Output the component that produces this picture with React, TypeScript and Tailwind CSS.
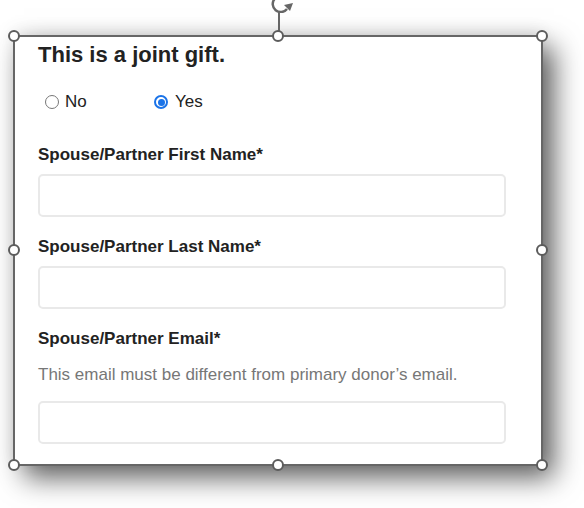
import React from 'react';

const handleSpots = [
  'left-[-7px] top-[-7px]',
  'left-[257px] top-[-7px]',
  'right-[-7px] top-[-7px]',
  'left-[-7px] top-[207px]',
  'right-[-7px] top-[207px]',
  'left-[-7px] bottom-[-7px]',
  'left-[257px] bottom-[-7px]',
  'right-[-7px] bottom-[-7px]',
];

function Field({ label, hint }: { label: string; hint?: string }) {
  return (
    <div className="flex flex-col">
      <label className="text-[17px] leading-[20px] font-bold text-[#222]">{label}</label>
      {hint && <p className="mt-[16px] text-[17px] leading-[20px] text-[#777]">{hint}</p>}
      <input
        type="text"
        className={`${hint ? 'mt-[16px]' : 'mt-[9px]'} w-[468px] h-[43px] rounded-[5px] border-2 border-[#e9e9e9] bg-white outline-none`}
      />
    </div>
  );
}

export default function App() {
  return (
    <div className="w-[584px] h-[508px] bg-white overflow-hidden font-['Liberation_Sans',Arial,sans-serif]">
      <div className="relative ml-[13px] mt-[35px] w-[530px] h-[431px] border-2 border-[#666] bg-white shadow-[11px_12px_26px_rgba(0,0,0,0.62),0_-4px_16px_rgba(0,0,0,0.08)]">
        {/* rotate handle */}
        <div className="absolute left-[263px] top-[-26px] w-[2px] h-[20px] bg-[#666]" />
        <svg className="absolute left-[252px] top-[-48px]" width="30" height="24" viewBox="0 0 30 24">
          <path d="M19 9 A8 8 0 1 0 20 20" fill="none" stroke="#666" strokeWidth="2.5" />
          <path d="M17 16 l9 -2 l-3 8 z" fill="#666" />
        </svg>
        {handleSpots.map((pos, i) => (
          <span key={i} className={`absolute ${pos} w-[12px] h-[12px] rounded-full bg-white border-2 border-[#5c5c5c] z-10`} />
        ))}

        <div className="pl-[23px] pt-[5px]">
          <h2 className="text-[22px] leading-[26px] font-bold text-[#222]">This is a joint gift.</h2>

          <div className="mt-[24px] flex items-center h-[20px] text-[17px] leading-[20px] text-[#222]">
            <label className="flex items-center ml-[7px] w-[109px]">
              <span className="w-[14px] h-[14px] rounded-full border border-[#777] bg-white" />
              <span className="ml-[6px]">No</span>
            </label>
            <label className="flex items-center">
              <span className="w-[14px] h-[14px] rounded-full border-2 border-[#1a73e8] bg-white flex items-center justify-center">
                <span className="w-[7px] h-[7px] rounded-full bg-[#1a73e8]" />
              </span>
              <span className="ml-[7px]">Yes</span>
            </label>
          </div>

          <div className="mt-[33px] flex flex-col gap-[20px]">
            <Field label="Spouse/Partner First Name*" />
            <Field label="Spouse/Partner Last Name*" />
            <Field label="Spouse/Partner Email*" hint="This email must be different from primary donor’s email." />
          </div>
        </div>
      </div>
    </div>
  );
}
